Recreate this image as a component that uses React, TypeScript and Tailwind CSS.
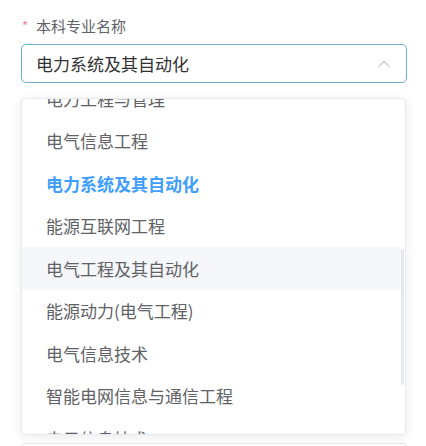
import { ChevronUp } from 'lucide-react'

const options = [
  '电力工程与管理',
  '电气信息工程',
  '电力系统及其自动化',
  '能源互联网工程',
  '电气工程及其自动化',
  '能源动力(电气工程)',
  '电气信息技术',
  '智能电网信息与通信工程',
  '电子信息技术',
]

const selected = '电力系统及其自动化'
const hovered = '电气工程及其自动化'

export default function App() {
  return (
    <div
      className="relative h-[446px] w-[426px] overflow-hidden bg-white"
      style={{ fontFamily: '"Noto Sans CJK SC", "Noto Sans", sans-serif' }}
    >
      <div className="px-[21px] pt-[15px]">
        {/* Label */}
        <div className="flex h-[20px] items-center text-[15px] leading-none text-[#606266]">
          <span className="ml-[1px] mr-[8px] text-[13px] text-[#f08c8c]">*</span>
          本科专业名称
        </div>

        {/* Select input */}
        <div className="mt-[9px] flex h-[39px] w-[386px] items-center justify-between rounded-[5px] border border-[#6fb0cf] pl-[14px] pr-[11px]">
          <span className="text-[17px] text-[#303133]">{selected}</span>
          <ChevronUp className="h-[22px] w-[22px] text-[#c8ccd2]" strokeWidth={1.2} />
        </div>

        {/* Dropdown */}
        <div className="relative mt-[15px] h-[337px] w-[385px] overflow-hidden rounded-[4px] border border-[#e8eaef] bg-white shadow-[0_2px_12px_rgba(0,0,0,0.08)]">
          <ul className="mt-[-22px]">
            {options.map((o) => (
              <li
                key={o}
                className={`flex h-[42.5px] items-center pl-[24px] text-[17px] ${
                  o === selected
                    ? 'font-bold text-[#409eff]'
                    : 'text-[#606266]'
                } ${o === hovered ? 'mr-[4px] bg-[#f5f7fa]' : ''}`}
              >
                {o}
              </li>
            ))}
          </ul>
          <div className="absolute right-[1px] top-[150px] h-[136px] w-[3px] rounded-full bg-[#e6e8ec]" />
        </div>

        {/* Next field peeking */}
        <div className="mt-[8px] h-[40px] w-[386px] rounded-[4px] border border-[#e4e7ed]" />
      </div>
    </div>
  )
}
